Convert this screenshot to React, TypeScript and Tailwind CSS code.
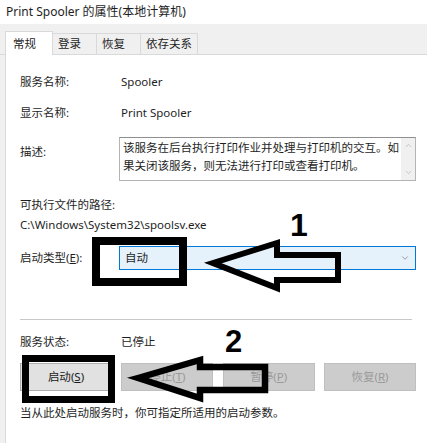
import { ChevronDown, ChevronUp } from "lucide-react";

const tabs = ["常规", "登录", "恢复", "依存关系"];

function Label({ children }: { children: React.ReactNode }) {
  return <div className="w-[99px] shrink-0">{children}</div>;
}

function TabStrip() {
  return (
    <div className="flex h-[31px] items-end bg-[#f0f0f0] pl-[5px] border-b border-[#d9d9d9]">
      {tabs.map((t, i) =>
        i === 0 ? (
          <div
            key={t}
            className="-mb-px flex h-[24px] w-[48px] items-center border border-b-0 border-[#d9d9d9] bg-white pl-[7px]"
          >
            {t}
          </div>
        ) : (
          <div
            key={t}
            className="flex h-[21px] items-center border-t border-r border-[#d9d9d9] px-[5px]"
            style={{ width: i === 3 ? 57 : 44 }}
          >
            {t}
          </div>
        )
      )}
    </div>
  );
}

function Button({ label, hot, enabled }: { label: string; hot: string; enabled?: boolean }) {
  return (
    <div
      className={
        enabled
          ? "flex h-[28px] w-[92px] items-center justify-center border border-[#adadad] bg-[#e1e1e1] text-[#1a1a1a]"
          : "flex h-[28px] w-[92px] items-center justify-center border border-[#bfbfbf] bg-[#cccccc] text-[#9a9a9a]"
      }
    >
      {label}(<span className="underline">{hot}</span>)
    </div>
  );
}

function Annotations() {
  return (
    <>
      <div className="absolute left-[92px] top-[237px] h-[49px] w-[95px] border-[8px] border-black" />
      <div className="absolute left-[22px] top-[355px] h-[48px] w-[93px] border-[7px] border-black" />
      <div className="absolute left-[290px] top-[209px] text-[32px] font-bold leading-none text-black [font-family:'Liberation_Sans',sans-serif]">
        1
      </div>
      <div className="absolute left-[225px] top-[326px] text-[31px] font-bold leading-none text-black [font-family:'Liberation_Sans',sans-serif]">
        2
      </div>
      <svg className="pointer-events-none absolute left-0 top-0" width="427" height="443">
        <polygon
          points="213,263 277,243 277,255 338,255 338,280 277,280 277,288"
          fill="none"
          stroke="#000"
          strokeWidth="6"
          strokeLinejoin="miter"
        />
        <polygon
          points="138,378 200,360 200,367 265,367 265,390 200,390 200,398"
          fill="none"
          stroke="#000"
          strokeWidth="6.5"
          strokeLinejoin="miter"
        />
      </svg>
    </>
  );
}

export default function App() {
  return (
    <div className="relative h-[443px] w-[427px] overflow-hidden bg-white text-[11.5px] text-[#1e1e1e] [font-family:'Noto_Sans','Noto_Sans_CJK_SC',sans-serif]">
      <div className="flex h-[24px] items-center pl-[6px] text-[12px]">
        Print Spooler 的属性(本地计算机)
      </div>
      <TabStrip />
      <div className="flex h-[388px] bg-[#f0f0f0] pl-[5px]">
        <div className="flex flex-1 flex-col border-l border-[#d9d9d9] bg-white pl-[14px] pr-[11px]">
          <div className="mt-[17px] flex h-[20px] items-center">
            <Label>服务名称:</Label>
            <span className="pl-[2px]">Spooler</span>
          </div>
          <div className="mt-[11px] flex h-[20px] items-center">
            <Label>显示名称:</Label>
            <span className="pl-[2px]">Print Spooler</span>
          </div>
          <div className="mt-[14px] flex">
            <div className="w-[99px] shrink-0 pt-[5px] leading-[20px]">描述:</div>
            <div className="flex h-[44px] flex-1 border border-[#b4b4b4] border-t-[#8f8f8f]">
              <div className="flex-1 whitespace-nowrap pl-[3px] pt-[1px] leading-[18px]">
                <div>该服务在后台执行打印作业并处理与打印机的交互。如</div>
                <div>果关闭该服务，则无法进行打印或查看打印机。</div>
              </div>
              <div className="flex w-[14px] flex-col items-center justify-between bg-[#f0f0f0] py-[3px] text-[#a6a6a6]">
                <ChevronUp size={9} strokeWidth={1.5} />
                <ChevronDown size={9} strokeWidth={1.5} />
              </div>
            </div>
          </div>
          <div className="mt-[14px] flex h-[20px] items-center">可执行文件的路径:</div>
          <div className="flex h-[20px] items-center">C:\Windows\System32\spoolsv.exe</div>
          <div className="mt-[11px] flex items-center">
            <Label>
              启动类型(<span className="underline">E</span>):
            </Label>
            <div className="flex h-[24px] flex-1 items-center justify-between border border-[#0078d7] bg-[#e5f1fb] pl-[5px] pr-[5px]">
              <span>自动</span>
              <ChevronDown size={10} strokeWidth={1.5} className="text-[#6b6b6b]" />
            </div>
          </div>
          <div className="mt-[49px] mr-[4px] h-px bg-[#c8c8c8]" />
          <div className="mt-[12px] flex h-[20px] items-center">
            <Label>服务状态:</Label>
            <span className="pl-[2px]">已停止</span>
          </div>
          <div className="mt-[11px] flex justify-between">
            <Button label="启动" hot="S" enabled />
            <Button label="停止" hot="T" />
            <Button label="暂停" hot="P" />
            <Button label="恢复" hot="R" />
          </div>
          <div className="mt-[12px] flex h-[20px] items-center">
            当从此处启动服务时，你可指定所适用的启动参数。
          </div>
        </div>
      </div>
      <Annotations />
    </div>
  );
}
